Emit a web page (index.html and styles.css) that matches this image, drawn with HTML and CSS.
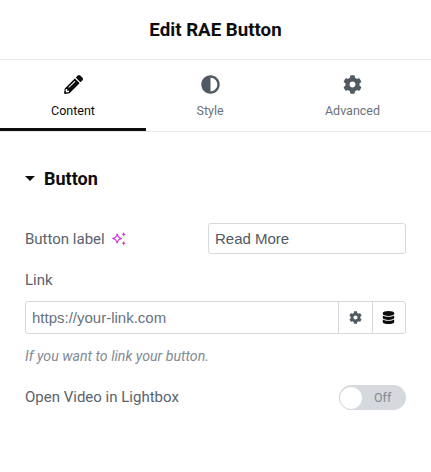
FILE: index.html
```html
<!DOCTYPE html>
<html lang="en">
<head>
<meta charset="utf-8">
<title>Edit RAE Button</title>
<link rel="stylesheet" href="styles.css">
</head>
<body>
<header class="header"><h1 class="title">Edit RAE Button</h1></header>
<nav class="tabs">
  <div class="tab tab-active">
    <svg class="tab-icon" viewBox="0 0 512 512"><path d="M497.9 142.1l-46.1 46.1c-4.700 4.700-12.300 4.700-17 0l-111-111c-4.700-4.700-4.700-12.300 0-17l46.100-46.100c18.700-18.700 49.100-18.700 67.900 0l60.100 60.100c18.800 18.700 18.800 49.100 0 67.900zM284.200 99.800L21.600 362.400.400 483.900c-2.900 16.400 11.400 30.600 27.800 27.800l121.500-21.300 262.600-262.600c4.700-4.700 4.700-12.300 0-17l-111-111c-4.800-4.700-12.400-4.700-17.100 0zM124.100 339.900c-5.500-5.500-5.500-14.300 0-19.800l154-154c5.500-5.500 14.300-5.500 19.800 0s5.500 14.300 0 19.800l-154 154c-5.500 5.500-14.300 5.500-19.800 0zM88 424h48v36.300l-64.500 11.300-31.100-31.100L51.700 376H88v48z"/></svg>
    <span>Content</span>
  </div>
  <div class="tab">
    <svg class="tab-icon" viewBox="0 0 512 512"><path d="M8 256c0 136.966 111.033 248 248 248s248-111.034 248-248S392.966 8 256 8 8 119.033 8 256zm248 184V72c101.705 0 184 82.311 184 184 0 101.705-82.311 184-184 184z"/></svg>
    <span>Style</span>
  </div>
  <div class="tab">
    <svg class="tab-icon" viewBox="0 0 512 512"><path d="M487.400 315.700l-42.600-24.600c4.300-23.200 4.300-47 0-70.200l42.600-24.600c4.900-2.800 7.100-8.600 5.500-14-11.100-35.600-30-67.800-54.700-94.600-3.800-4.100-10-5.100-14.800-2.300L380.800 110c-17.900-15.400-38.500-27.300-60.800-35.100V25.800c0-5.600-3.900-10.500-9.400-11.700-36.700-8.200-74.300-7.800-109.200 0-5.500 1.200-9.400 6.100-9.400 11.700V75c-22.200 7.900-42.800 19.800-60.800 35.100L88.700 85.500c-4.900-2.800-11-1.900-14.800 2.300-24.700 26.700-43.600 58.900-54.700 94.600-1.700 5.400.6 11.200 5.500 14L67.300 221c-4.300 23.200-4.300 47 0 70.200l-42.600 24.600c-4.900 2.800-7.100 8.600-5.500 14 11.100 35.600 30 67.800 54.700 94.600 3.800 4.100 10 5.100 14.800 2.300l42.600-24.600c17.900 15.400 38.500 27.300 60.800 35.100v49.200c0 5.600 3.900 10.500 9.400 11.700 36.700 8.200 74.300 7.800 109.200 0 5.500-1.200 9.400-6.100 9.400-11.700v-49.200c22.200-7.900 42.800-19.800 60.800-35.100l42.600 24.600c4.900 2.800 11 1.900 14.800-2.300 24.700-26.700 43.600-58.900 54.700-94.600 1.500-5.500-.7-11.300-5.600-14.100zM256 336c-44.100 0-80-35.900-80-80s35.900-80 80-80 80 35.900 80 80-35.900 80-80 80z"/></svg>
    <span>Advanced</span>
  </div>
</nav>
<main class="panel">
  <div class="section-head">
    <span class="caret"></span>
    <h2 class="section-title">Button</h2>
  </div>
  <div class="row-inline label-row">
    <div class="label-group">
      <span class="label">Button label</span>
      <svg class="sparkle" viewBox="0 0 16 16"><path class="sparkle-line" d="M5.500 3C6 6.200 7 7.500 10.500 8 7 8.500 6 9.800 5.500 13 5 9.800 4 8.500.500 8 4 7.500 5 6.200 5.500 3Z"/><path class="sparkle-fill" d="M12.500 1l.7 1.800 1.800.7-1.800.7-.7 1.800-.7-1.800-1.800-.7 1.800-.7zM12.500 10.500l.7 1.800 1.800.7-1.800.7-.7 1.800-.7-1.800-1.800-.7 1.800-.7z"/></svg>
    </div>
    <div class="text-input">Read More</div>
  </div>
  <div class="label link-label">Link</div>
  <div class="url-group">
    <div class="url-text">https://your-link.com</div>
    <div class="url-btn">
      <svg class="url-icon gear" viewBox="0 0 512 512"><path d="M487.400 315.700l-42.600-24.600c4.300-23.200 4.300-47 0-70.200l42.600-24.600c4.900-2.800 7.100-8.600 5.500-14-11.100-35.600-30-67.800-54.700-94.600-3.800-4.100-10-5.100-14.800-2.300L380.800 110c-17.900-15.400-38.500-27.300-60.800-35.100V25.800c0-5.600-3.900-10.500-9.400-11.700-36.700-8.200-74.300-7.800-109.200 0-5.500 1.200-9.400 6.100-9.400 11.700V75c-22.200 7.900-42.800 19.800-60.800 35.100L88.700 85.500c-4.900-2.800-11-1.900-14.800 2.300-24.700 26.700-43.600 58.900-54.700 94.600-1.700 5.400.6 11.200 5.500 14L67.300 221c-4.300 23.200-4.300 47 0 70.200l-42.600 24.600c-4.900 2.800-7.100 8.600-5.500 14 11.100 35.600 30 67.800 54.700 94.600 3.800 4.100 10 5.100 14.800 2.300l42.600-24.600c17.900 15.400 38.500 27.300 60.800 35.100v49.200c0 5.600 3.900 10.500 9.400 11.700 36.700 8.200 74.300 7.800 109.200 0 5.500-1.200 9.400-6.100 9.400-11.700v-49.200c22.200-7.900 42.800-19.800 60.800-35.100l42.600 24.600c4.900 2.800 11 1.900 14.800-2.300 24.700-26.700 43.600-58.900 54.700-94.600 1.500-5.500-.7-11.300-5.600-14.100zM256 336c-44.100 0-80-35.900-80-80s35.900-80 80-80 80 35.900 80 80-35.900 80-80 80z"/></svg>
    </div>
    <div class="url-btn">
      <svg class="url-icon db" viewBox="0 0 448 512"><path d="M448 73.143v45.714C448 159.143 347.667 192 224 192S0 159.143 0 118.857V73.143C0 32.857 100.333 0 224 0s224 32.857 224 73.143zM448 176v102.857C448 319.143 347.667 352 224 352S0 319.143 0 278.857V176c48.125 33.143 136.208 48.572 224 48.572S399.874 209.143 448 176zm0 160v102.857C448 479.143 347.667 512 224 512S0 479.143 0 438.857V336c48.125 33.143 136.208 48.572 224 48.572S399.874 369.143 448 336z"/></svg>
    </div>
  </div>
  <p class="hint">If you want to link your button.</p>
  <div class="row-inline switch-row">
    <span class="label switch-label">Open Video in Lightbox</span>
    <div class="switch"><span class="knob"></span><span class="switch-text">Off</span></div>
  </div>
</main>
</body>
</html>
```
FILE: styles.css
```css
* { box-sizing: border-box; }
html, body { margin: 0; background: #fff; }
body { font-family: Roboto, sans-serif; color: #515962; width: 431px; height: 472px; overflow: hidden; }
.header { height: 60px; border-bottom: 1px solid #e6e8ea; display: flex; align-items: center; justify-content: center; }
.title { margin: 0; font-size: 18.700px; font-weight: 700; color: #0c0d0e; }
.tabs { display: grid; grid-template-columns: 146px 128px 157px; height: 72px; border-bottom: 1px solid #e6e8ea; }
.tab { display: flex; flex-direction: column; align-items: center; padding-top: 15px; font-size: 12.500px; color: #69727d; height: 71px; }
.tab span { margin-top: 9px; line-height: 15px; }
.tab-icon { width: 19px; height: 19px; fill: #515962; display: block; }
.tab-active { color: #0c0d0e; border-bottom: 3px solid #0c0d0e; }
.tab-active .tab-icon { fill: #0c0d0e; }
.panel { padding: 0 25px; }
.section-head { display: flex; align-items: center; margin-top: 36px; height: 20px; }
.caret { width: 0; height: 0; border-left: 5px solid transparent; border-right: 5px solid transparent; border-top: 5px solid #0c0d0e; margin-right: 9px; margin-top: 1px; }
.section-title { margin: 0; font-size: 18px; font-weight: 700; color: #0c0d0e; }
.row-inline { display: flex; align-items: center; justify-content: space-between; }
.label-row { margin-top: 35px; height: 31px; }
.label-group { display: flex; align-items: center; gap: 7px; }
.label { font-size: 15px; color: #5a626c; line-height: 18px; }
.sparkle { width: 15px; height: 15px; }
.sparkle-line { fill: none; stroke: #c930d8; stroke-width: 1.200; }
.sparkle-fill { fill: #c930d8; }
.text-input { width: 198px; height: 31px; border: 1px solid #d5d8dc; border-radius: 3px; padding-left: 6px; font-family: "Liberation Sans", Arial, sans-serif; font-size: 15px; line-height: 29px; color: #515962; }
.link-label { margin-top: 17px; }
.url-group { display: flex; height: 33px; margin-top: 12px; border: 1px solid #d5d8dc; border-radius: 3px; }
.url-text { flex: 1; padding-left: 6px; font-family: "Liberation Sans", Arial, sans-serif; font-size: 15px; line-height: 31px; color: #69727d; }
.url-btn { width: 33.500px; border-left: 1px solid #d5d8dc; display: flex; align-items: center; justify-content: center; }
.url-icon { width: 13px; height: 13px; }
.gear { fill: #515962; }
.db { fill: #0c0d0e; }
.hint { margin: 14px 0 0; font-size: 14.150px; font-style: italic; line-height: 16px; color: #818a96; }
.switch-row { margin-top: 21px; height: 25px; }
.switch-label { padding-bottom: 2px; }
.switch { width: 67px; height: 25px; border-radius: 13px; background: #d5d8dc; display: flex; align-items: center; }
.knob { width: 24px; height: 24px; border-radius: 50%; background: #fff; border: 1px solid #d5d8dc; }
.switch-text { font-size: 12.500px; color: #818a96; margin-left: 11px; }
```
